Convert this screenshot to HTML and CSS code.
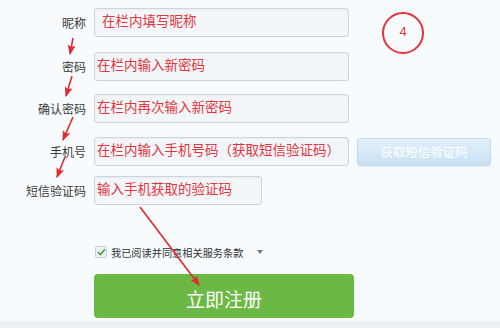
FILE: index.html
```html
<!DOCTYPE html>
<html lang="zh-CN">
<head>
<meta charset="utf-8">
<title>注册</title>
<link rel="stylesheet" href="styles.css">
</head>
<body>
<div class="page">
  <form class="form">
    <div class="row r1"><span class="lbl">昵称</span><div class="field nick">在栏内填写昵称</div></div>
    <div class="row r2"><span class="lbl">密码</span><div class="field">在栏内输入新密码</div></div>
    <div class="row r3"><span class="lbl">确认密码</span><div class="field">在栏内再次输入新密码</div></div>
    <div class="row r4"><span class="lbl">手机号</span><div class="field">在栏内输入手机号码（获取短信验证码）</div><span class="sms-btn">获取短信验证码</span></div>
    <div class="row r5"><span class="lbl">短信验证码</span><div class="field short">输入手机获取的验证码</div></div>
    <div class="row agree-row"><span class="lbl"></span>
      <div class="agree">
        <span class="check"><svg width="9" height="8" viewBox="0 0 9 8"><path d="M1 4.2 L3.4 6.5 L8 1.2" fill="none" stroke="#3aa53a" stroke-width="1.6"/></svg></span>
        <span class="agree-text">我已阅读并同意相关服务条款</span>
        <span class="caret"></span>
      </div>
    </div>
    <div class="row submit-row"><span class="lbl"></span><span class="submit">立即注册</span></div>
  </form>
  <div class="strip"></div>
  <div class="badge">4</div>
  <svg class="annot" width="500" height="328" viewBox="0 0 500 328">
    <defs>
      <marker id="ah" markerWidth="10" markerHeight="8" refX="9" refY="4" orient="auto" markerUnits="userSpaceOnUse">
        <path d="M0 0 L10 4 L0 8 L2 4 Z" fill="#e8262e"/>
      </marker>
    </defs>
    <g stroke="#e8262e" stroke-width="1.6" fill="none">
      <line x1="73" y1="38" x2="70" y2="54" marker-end="url(#ah)"/>
      <line x1="72" y1="76" x2="66" y2="96" marker-end="url(#ah)"/>
      <line x1="73" y1="117" x2="63" y2="140" marker-end="url(#ah)"/>
      <line x1="65" y1="157" x2="57" y2="177" marker-end="url(#ah)"/>
      <line x1="140" y1="207" x2="199" y2="285" marker-end="url(#ah)"/>
    </g>
  </svg>
</div>
</body>
</html>
```
FILE: styles.css
```css
html, body {
  margin: 0;
  padding: 0;
}
body {
  background: #f7fbfd;
  font-family: "Noto Sans CJK SC", "Noto Sans", sans-serif;
  color: #333;
}
.page {
  position: relative;
  width: 500px;
  height: 328px;
  display: flex;
  flex-direction: column;
  overflow: hidden;
}
.form {
  flex: 1;
  display: flex;
  flex-direction: column;
  padding-top: 8px;
}
.row {
  display: flex;
  align-items: center;
}
.r2 { margin-top: 15px; }
.r3 { margin-top: 13px; }
.r4 { margin-top: 14px; }
.r5 { margin-top: 10px; }
.lbl {
  width: 86px;
  text-align: right;
  font-size: 12px;
  color: #3a3a3a;
  flex: none;
}
.field {
  margin-left: 8px;
  width: 255px;
  height: 29px;
  box-sizing: border-box;
  background: #f3f6f9;
  border: 1px solid #cdd4db;
  border-radius: 3px;
  box-shadow: inset 0 1px 2px rgba(0,0,0,0.04);
  color: #e3353d;
  font-size: 13.5px;
  line-height: 16px;
  padding: 3px 0 0 2px;
  white-space: nowrap;
  overflow: hidden;
}
.field.nick { padding-left: 7px; }
.field.short { width: 168px; }
.sms-btn {
  margin-left: 8px;
  width: 134px;
  height: 28px;
  box-sizing: border-box;
  border: 1px solid #c3dbee;
  border-radius: 3px;
  background: linear-gradient(#e2f0fa, #c8e1f4);
  color: #fff;
  font-size: 12.5px;
  display: flex;
  align-items: center;
  justify-content: center;
  box-shadow: 0 1px 1px rgba(0,0,0,0.06);
}
.agree-row { margin-top: 40px; }
.agree {
  margin-left: 9px;
  display: flex;
  align-items: center;
  height: 14px;
}
.check {
  width: 12px;
  height: 12px;
  box-sizing: border-box;
  border: 1px solid #c9d0d6;
  border-radius: 2px;
  background: #eef1f4;
  display: flex;
  align-items: center;
  justify-content: center;
}
.agree-text {
  margin-left: 4px;
  font-size: 10.2px;
  color: #333;
  white-space: nowrap;
}
.caret {
  margin-left: 14px;
  width: 0;
  height: 0;
  border-left: 3px solid transparent;
  border-right: 3px solid transparent;
  border-top: 4px solid #6a7580;
}
.submit-row { margin-top: 15px; }
.submit {
  margin-left: 8px;
  width: 260px;
  height: 44px;
  border-radius: 4px;
  background: #6bb944;
  color: #fff;
  font-size: 19px;
  display: flex;
  align-items: center;
  justify-content: center;
  padding-top: 4px;
  box-sizing: border-box;
}
.strip {
  height: 7px;
  background: #edf1f5;
}
.badge {
  position: absolute;
  left: 382px;
  top: 12px;
  width: 38px;
  height: 38px;
  border: 2px solid #e5323a;
  border-radius: 50%;
  color: #e5323a;
  font-size: 13px;
  line-height: 36px;
  text-align: center;
  font-family: "Liberation Sans", sans-serif;
}
.annot {
  position: absolute;
  left: 0;
  top: 0;
  pointer-events: none;
}
```
